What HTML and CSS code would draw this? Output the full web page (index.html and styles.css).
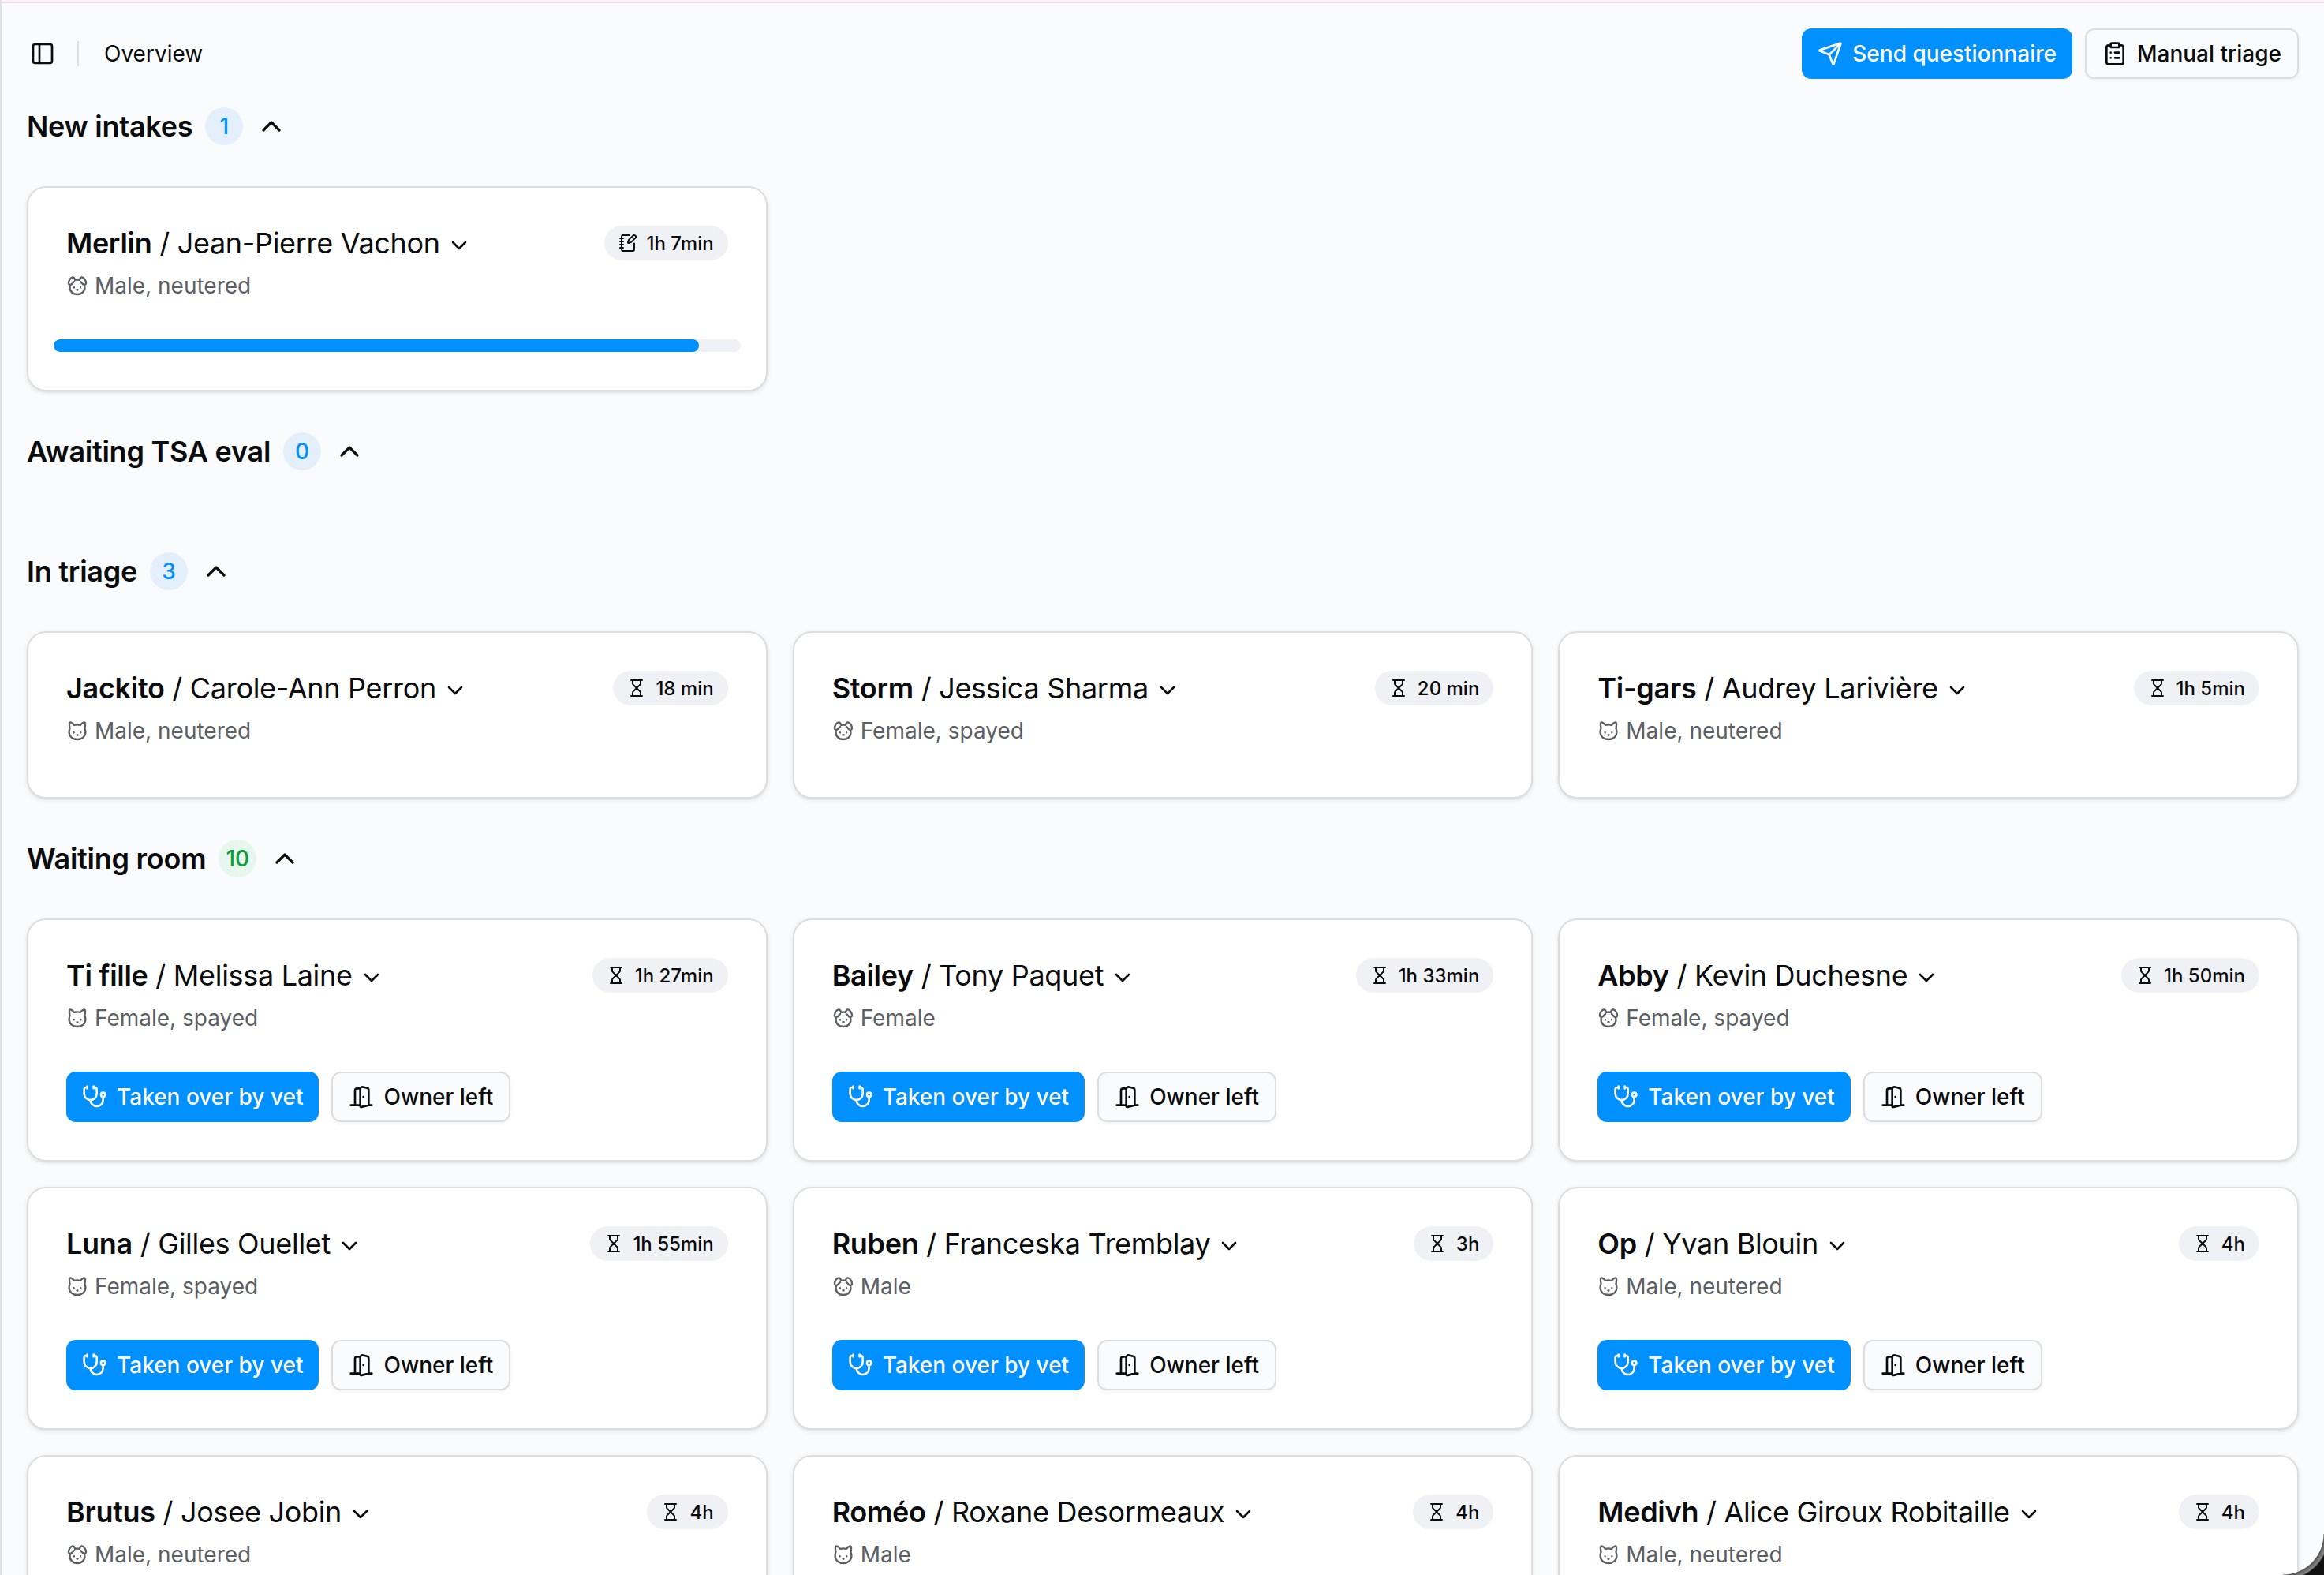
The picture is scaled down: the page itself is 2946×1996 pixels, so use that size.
FILE: index.html
```html
<!DOCTYPE html>
<html lang="en">
<head>
<meta charset="utf-8">
<title>Overview</title>
<link rel="stylesheet" href="styles.css">
</head>
<body>
<svg class="sprite" aria-hidden="true">
  <symbol id="panel" viewBox="0 0 24 24"><rect width="18" height="18" x="3" y="3" rx="2"/><path d="M9 3v18"/></symbol>
  <symbol id="send" viewBox="0 0 24 24"><path d="M14.536 21.686a.5.5 0 0 0 .937-.024l6.5-19a.496.496 0 0 0-.635-.635l-19 6.5a.5.5 0 0 0-.024.937l7.93 3.18a2 2 0 0 1 1.112 1.11z"/><path d="m21.854 2.147-10.94 10.939"/></symbol>
  <symbol id="clipboard" viewBox="0 0 24 24"><rect width="8" height="4" x="8" y="2" rx="1"/><path d="M16 4h2a2 2 0 0 1 2 2v14a2 2 0 0 1-2 2H6a2 2 0 0 1-2-2V6a2 2 0 0 1 2-2h2"/><path d="M12 11h4M12 16h4M8 11h.01M8 16h.01"/></symbol>
  <symbol id="up" viewBox="0 0 24 24"><path d="m18 15-6-6-6 6"/></symbol>
  <symbol id="down" viewBox="0 0 24 24"><path d="m6 9 6 6 6-6"/></symbol>
  <symbol id="notebook" viewBox="0 0 24 24"><path d="M13.4 2H6a2 2 0 0 0-2 2v16a2 2 0 0 0 2 2h12a2 2 0 0 0 2-2v-7.4"/><path d="M2 6h4M2 10h4M2 14h4M2 18h4"/><path d="M21.378 5.626a1 1 0 1 0-3.004-3.004l-5.01 5.012a2 2 0 0 0-.506.854l-.837 2.87a.5.5 0 0 0 .62.62l2.87-.837a2 2 0 0 0 .854-.506z"/></symbol>
  <symbol id="hourglass" viewBox="0 0 24 24"><path d="M5 22h14M5 2h14M17 22v-4.172a2 2 0 0 0-.586-1.414L12 12l-4.414 4.414A2 2 0 0 0 7 17.828V22M7 2v4.172a2 2 0 0 0 .586 1.414L12 12l4.414-4.414A2 2 0 0 0 17 6.172V2"/></symbol>
  <symbol id="steth" viewBox="0 0 24 24"><path d="M11 2v2M5 2v2M5 3H4a2 2 0 0 0-2 2v4a6 6 0 0 0 12 0V5a2 2 0 0 0-2-2h-1"/><path d="M8 15a6 6 0 0 0 12 0v-3"/><circle cx="20" cy="10" r="2"/></symbol>
  <symbol id="door" viewBox="0 0 24 24"><path d="M11 20H2M11 4.562v16.157a1 1 0 0 0 1.242.97L19 20V5.562a2 2 0 0 0-1.515-1.94l-4-1A2 2 0 0 0 11 4.561zM11 4H8a2 2 0 0 0-2 2v14M14 12h.01M22 20h-3"/></symbol>
  <symbol id="cat" viewBox="0 0 24 24"><path d="M3.4 4.1c0-1 .9-1.5 1.8-1 1.500.6 2.500 1.600 3.500 2.800 2.100-.6 4.500-.6 6.600 0 1-1.200 2-2.200 3.500-2.800.9-.5 1.800 0 1.800 1 .2 2-.2 3.600-.5 5.200.5 1.200.8 2.700.8 4.200 0 5-3.900 7.900-8.900 7.900S3.100 18.500 3.100 13.500c0-1.500.3-3 .8-4.200-.3-1.600-.7-3.200-.5-5.200z"/><path d="M8.300 13.900v.3M15.700 13.900v.3M11.600 16.600h.8l-.4.400z"/></symbol>
  <symbol id="dog" viewBox="0 0 24 24"><path d="M9.600 5.900C9 3.800 8.300 2.600 6.800 2.900 4.500 3.500 2.700 6.500 2.500 9c-.1 1.300 1 2.300 2.300 2C6.900 10.500 7 8.600 8.700 7.700M14.400 5.900c.6-2.100 1.300-3.300 2.800-3 2.300.6 4.100 3.600 4.300 6.100.1 1.300-1 2.300-2.300 2-2.100-.5-2.200-2.400-3.900-3.300M9.600 5.900c1.500-.4 3.300-.4 4.800 0M4.600 11c-.5 1.100-.7 2.100-.7 3.200 0 4.500 3.600 7.200 8.100 7.200s8.100-2.700 8.100-7.200c0-1.100-.2-2.100-.7-3.200"/><path d="M8.500 13.900v.3M15.500 13.900v.3M11.500 16.400h1l-.5.500z"/></symbol>
</svg>

<div class="page">
  <header class="topbar">
    <svg class="icon"><use href="#panel"/></svg>
    <span class="divider"></span>
    <span class="crumb">Overview</span>
    <div class="actions">
      <button class="btn primary"><svg class="icon"><use href="#send"/></svg>Send questionnaire</button>
      <button class="btn outline"><svg class="icon"><use href="#clipboard"/></svg>Manual triage</button>
    </div>
  </header>

  <main>
    <section>
      <h2>New intakes<span class="count">1</span><svg class="toggle"><use href="#up"/></svg></h2>
      <div class="grid">
        <article class="card">
          <div class="head">
            <div class="title"><span><b>Merlin</b> / Jean-Pierre Vachon</span><svg class="icon"><use href="#down"/></svg></div>
            <span class="badge"><svg><use href="#notebook"/></svg>1h 7min</span>
            <p class="sex"><svg><use href="#dog"/></svg>Male, neutered</p>
          </div>
          <div class="progress"><div class="bar" style="width: 94%"></div></div>
        </article>
      </div>
    </section>

    <section>
      <h2>Awaiting TSA eval<span class="count">0</span><svg class="toggle"><use href="#up"/></svg></h2>
      <div class="grid"></div>
    </section>

    <section>
      <h2>In triage<span class="count">3</span><svg class="toggle"><use href="#up"/></svg></h2>
      <div class="grid">
        <article class="card">
          <div class="head">
            <div class="title"><span><b>Jackito</b> / Carole-Ann Perron</span><svg class="icon"><use href="#down"/></svg></div>
            <span class="badge"><svg><use href="#hourglass"/></svg>18 min</span>
            <p class="sex"><svg><use href="#cat"/></svg>Male, neutered</p>
          </div>
        </article>
        <article class="card">
          <div class="head">
            <div class="title"><span><b>Storm</b> / Jessica Sharma</span><svg class="icon"><use href="#down"/></svg></div>
            <span class="badge"><svg><use href="#hourglass"/></svg>20 min</span>
            <p class="sex"><svg><use href="#dog"/></svg>Female, spayed</p>
          </div>
        </article>
        <article class="card">
          <div class="head">
            <div class="title"><span><b>Ti-gars</b> / Audrey Larivière</span><svg class="icon"><use href="#down"/></svg></div>
            <span class="badge"><svg><use href="#hourglass"/></svg>1h 5min</span>
            <p class="sex"><svg><use href="#cat"/></svg>Male, neutered</p>
          </div>
        </article>
      </div>
    </section>

    <section>
      <h2>Waiting room<span class="count green">10</span><svg class="toggle"><use href="#up"/></svg></h2>
      <div class="grid">
        <article class="card">
          <div class="head">
            <div class="title"><span><b>Ti fille</b> / Melissa Laine</span><svg class="icon"><use href="#down"/></svg></div>
            <span class="badge"><svg><use href="#hourglass"/></svg>1h 27min</span>
            <p class="sex"><svg><use href="#cat"/></svg>Female, spayed</p>
          </div>
          <div class="foot"><button class="btn primary"><svg class="icon"><use href="#steth"/></svg>Taken over by vet</button><button class="btn outline"><svg class="icon"><use href="#door"/></svg>Owner left</button></div>
        </article>
        <article class="card">
          <div class="head">
            <div class="title"><span><b>Bailey</b> / Tony Paquet</span><svg class="icon"><use href="#down"/></svg></div>
            <span class="badge"><svg><use href="#hourglass"/></svg>1h 33min</span>
            <p class="sex"><svg><use href="#dog"/></svg>Female</p>
          </div>
          <div class="foot"><button class="btn primary"><svg class="icon"><use href="#steth"/></svg>Taken over by vet</button><button class="btn outline"><svg class="icon"><use href="#door"/></svg>Owner left</button></div>
        </article>
        <article class="card">
          <div class="head">
            <div class="title"><span><b>Abby</b> / Kevin Duchesne</span><svg class="icon"><use href="#down"/></svg></div>
            <span class="badge"><svg><use href="#hourglass"/></svg>1h 50min</span>
            <p class="sex"><svg><use href="#dog"/></svg>Female, spayed</p>
          </div>
          <div class="foot"><button class="btn primary"><svg class="icon"><use href="#steth"/></svg>Taken over by vet</button><button class="btn outline"><svg class="icon"><use href="#door"/></svg>Owner left</button></div>
        </article>
        <article class="card">
          <div class="head">
            <div class="title"><span><b>Luna</b> / Gilles Ouellet</span><svg class="icon"><use href="#down"/></svg></div>
            <span class="badge"><svg><use href="#hourglass"/></svg>1h 55min</span>
            <p class="sex"><svg><use href="#cat"/></svg>Female, spayed</p>
          </div>
          <div class="foot"><button class="btn primary"><svg class="icon"><use href="#steth"/></svg>Taken over by vet</button><button class="btn outline"><svg class="icon"><use href="#door"/></svg>Owner left</button></div>
        </article>
        <article class="card">
          <div class="head">
            <div class="title"><span><b>Ruben</b> / Franceska Tremblay</span><svg class="icon"><use href="#down"/></svg></div>
            <span class="badge"><svg><use href="#hourglass"/></svg>3h</span>
            <p class="sex"><svg><use href="#dog"/></svg>Male</p>
          </div>
          <div class="foot"><button class="btn primary"><svg class="icon"><use href="#steth"/></svg>Taken over by vet</button><button class="btn outline"><svg class="icon"><use href="#door"/></svg>Owner left</button></div>
        </article>
        <article class="card">
          <div class="head">
            <div class="title"><span><b>Op</b> / Yvan Blouin</span><svg class="icon"><use href="#down"/></svg></div>
            <span class="badge"><svg><use href="#hourglass"/></svg>4h</span>
            <p class="sex"><svg><use href="#cat"/></svg>Male, neutered</p>
          </div>
          <div class="foot"><button class="btn primary"><svg class="icon"><use href="#steth"/></svg>Taken over by vet</button><button class="btn outline"><svg class="icon"><use href="#door"/></svg>Owner left</button></div>
        </article>
        <article class="card">
          <div class="head">
            <div class="title"><span><b>Brutus</b> / Josee Jobin</span><svg class="icon"><use href="#down"/></svg></div>
            <span class="badge"><svg><use href="#hourglass"/></svg>4h</span>
            <p class="sex"><svg><use href="#dog"/></svg>Male, neutered</p>
          </div>
        </article>
        <article class="card">
          <div class="head">
            <div class="title"><span><b>Roméo</b> / Roxane Desormeaux</span><svg class="icon"><use href="#down"/></svg></div>
            <span class="badge"><svg><use href="#hourglass"/></svg>4h</span>
            <p class="sex"><svg><use href="#cat"/></svg>Male</p>
          </div>
        </article>
        <article class="card">
          <div class="head">
            <div class="title"><span><b>Medivh</b> / Alice Giroux Robitaille</span><svg class="icon"><use href="#down"/></svg></div>
            <span class="badge"><svg><use href="#hourglass"/></svg>4h</span>
            <p class="sex"><svg><use href="#cat"/></svg>Male, neutered</p>
          </div>
        </article>
      </div>
    </section>
  </main>
  <div class="corner"></div>
</div>
</body>
</html>
```

FILE: styles.css
```css
* { box-sizing: border-box; }
body {
  margin: 0;
  font-family: Inter, "Liberation Sans", sans-serif;
  font-size: 28px;
  color: #0a0b0d;
  background: #fafbfd;
}
.sprite { position: absolute; width: 0; height: 0; }
svg {
  fill: none;
  stroke: currentColor;
  stroke-width: 2;
  stroke-linecap: round;
  stroke-linejoin: round;
  flex: none;
}
.page {
  position: relative;
  height: 1996px;
  overflow: hidden;
  border-left: 2px solid #dfe0e4;
  box-shadow: inset 0 2px #fdf2f9, inset 0 4px #ecdde8;
}
.icon { width: 32px; height: 32px; }
.topbar {
  display: flex;
  align-items: center;
  height: 136px;
  padding: 0 32px 0 36px;
}
.divider { width: 2px; height: 32px; margin: 0 32px 0 28px; background: #dcdee0; }
.crumb { line-height: 40px; }
.actions { display: flex; gap: 16px; margin-left: auto; }
.btn {
  display: flex;
  align-items: center;
  gap: 12px;
  height: 64px;
  padding: 0 20px;
  border: 0;
  border-radius: 12px;
  font: 500 28px/40px Inter, "Liberation Sans", sans-serif;
  color: inherit;
  white-space: nowrap;
}
.primary { background: #0090ff; color: #fff; }
.outline { border: 2px solid #dcdee0; background: #fafbfd; box-shadow: 0 2px 4px rgba(0, 0, 0, .05); }
main { padding: 0 32px; }
h2 {
  display: flex;
  align-items: center;
  gap: 16px;
  height: 48px;
  margin: 0 0 52px;
  font-size: 36px;
  font-weight: 600;
  letter-spacing: -.25px;
}
.count {
  display: flex;
  align-items: center;
  justify-content: center;
  width: 48px;
  height: 48px;
  border-radius: 50%;
  background: #e4effc;
  color: #0090ff;
  font-size: 28px;
  font-weight: 500;
  letter-spacing: 0;
}
.green { background: #e8f7ee; color: #0aa03c; }
.toggle { width: 40px; height: 40px; }
.grid {
  display: grid;
  grid-template-columns: repeat(3, 1fr);
  gap: 32px;
  margin-bottom: 52px;
}
.grid:empty { margin-top: -52px; padding-top: 52px; }
.card {
  padding: 48px;
  border: 2px solid #dcdee0;
  border-radius: 24px;
  background: #fff;
  box-shadow: 0 2px 6px rgba(0, 0, 0, .08), 0 2px 4px -2px rgba(0, 0, 0, .1);
}
.head {
  display: grid;
  grid-template-columns: 1fr auto;
  grid-template-rows: 44px 40px;
  row-gap: 12px;
  height: 112px;
}
.title {
  display: flex;
  align-items: center;
  gap: 8px;
  font-size: 36px;
  line-height: 44px;
  letter-spacing: -.31px;
  white-space: nowrap;
}
.title b { font-weight: 600; }
.title .icon { position: relative; top: 3px; }
.badge {
  display: flex;
  align-items: center;
  gap: 12px;
  height: 44px;
  padding: 0 18px;
  border-radius: 22px;
  background: #f0f1f5;
  font-size: 24px;
  font-weight: 500;
  white-space: nowrap;
}
.badge svg { width: 24px; height: 24px; }
.sex { display: flex; align-items: center; gap: 8px; margin: 0; line-height: 40px; color: #5c6064; }
.sex svg { width: 28px; height: 28px; }
.foot { display: flex; gap: 16px; margin-top: 32px; }
.progress { height: 16px; margin: 32px -16px 0; border-radius: 8px; background: #f0f1f4; overflow: hidden; }
.bar { height: 16px; border-radius: 8px; background: #0090ff; }
.corner {
  position: absolute;
  right: 0;
  bottom: 0;
  width: 52px;
  height: 52px;
  background: radial-gradient(circle at 0 0, transparent 51px, #555 52px, #8a8a8a 57px, #111 59px);
}
```
